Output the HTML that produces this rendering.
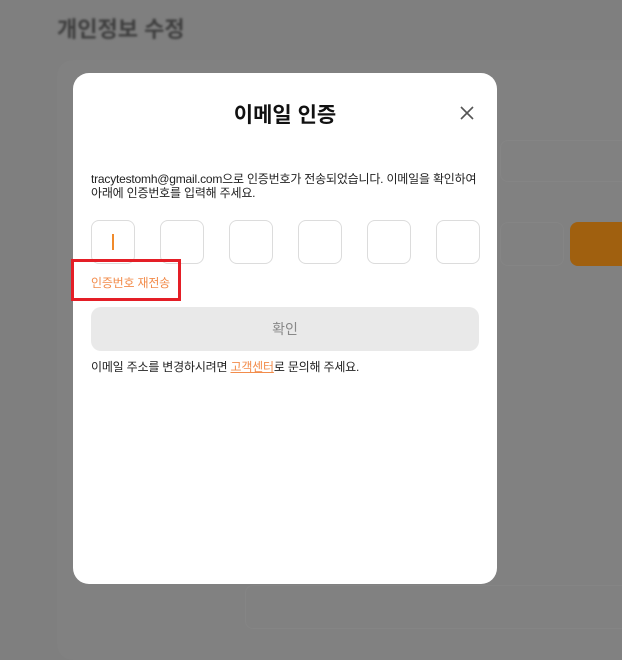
<!DOCTYPE html>
<html><head><meta charset="utf-8"><style>
body{margin:0;width:622px;height:650px;background:#7f7f7f;position:relative;overflow:hidden;font-family:"Liberation Sans","Noto Sans CJK KR",sans-serif}
.bg-title{position:absolute;left:57px;top:12px;font-size:22px;font-weight:bold;color:#3e3e3e;filter:blur(1px)}
.card{position:absolute;left:57px;top:60px;width:600px;height:600px;background:#818181;border-radius:16px}
.inp{position:absolute;border:1px solid #858585;border-radius:8px}
.orange{position:absolute;left:570px;top:222px;width:60px;height:44px;background:#a0600f;border-radius:8px}
.modal{position:absolute;left:73px;top:73px;width:424px;height:511px;background:#fff;border-radius:16px}
.title{position:absolute;left:73px;width:424px;top:99px;text-align:center;font-size:21px;font-weight:bold;color:#111}
.x{position:absolute;left:459px;top:105px}
.t{position:absolute;left:91px;font-size:12px;color:#222;line-height:14px;letter-spacing:-0.2px}
.box{position:absolute;top:220px;width:42px;height:42px;border:1px solid #dcdcdc;border-radius:8px;background:#fff}
.red{position:absolute;left:71px;top:259px;width:104px;height:36px;border:3px solid #e41e26}
.btn{position:absolute;left:91px;top:307px;width:388px;height:44px;background:#e9e9e9;border-radius:10px;text-align:center;line-height:44px;font-size:14px;color:#888}
</style></head><body>
<div class="bg-title">개인정보 수정</div>
<div class="card"></div>
<div class="inp" style="left:500px;top:140px;width:140px;height:40px"></div>
<div class="inp" style="left:500px;top:222px;width:62px;height:42px"></div>
<div class="orange"></div>
<div class="inp" style="left:245px;top:585px;width:400px;height:42px"></div>
<div class="modal"></div>
<div class="title">이메일 인증</div>
<svg class="x" width="16" height="16" viewBox="0 0 16 16"><path d="M2 2L14 14M14 2L2 14" stroke="#555" stroke-width="1.6"/></svg>
<div class="t" style="top:172px">tracytestomh@gmail.com으로 인증번호가 전송되었습니다. 이메일을 확인하여<br>아래에 인증번호를 입력해 주세요.</div>
<div class="box" style="left:91px"><div style="position:absolute;left:20px;top:13px;width:1.5px;height:16px;background:#f08a2b"></div></div>
<div class="box" style="left:160px"></div>
<div class="box" style="left:229px"></div>
<div class="box" style="left:298px"></div>
<div class="box" style="left:367px"></div>
<div class="box" style="left:436px"></div>
<div class="red"></div>
<div class="t" style="top:276px;color:#f28c4b">인증번호 재전송</div>
<div class="btn">확인</div>
<div class="t" style="top:360px">이메일 주소를 변경하시려면 <span style="color:#f28c4b;text-decoration:underline">고객센터</span>로 문의해 주세요.</div>
</body></html>
